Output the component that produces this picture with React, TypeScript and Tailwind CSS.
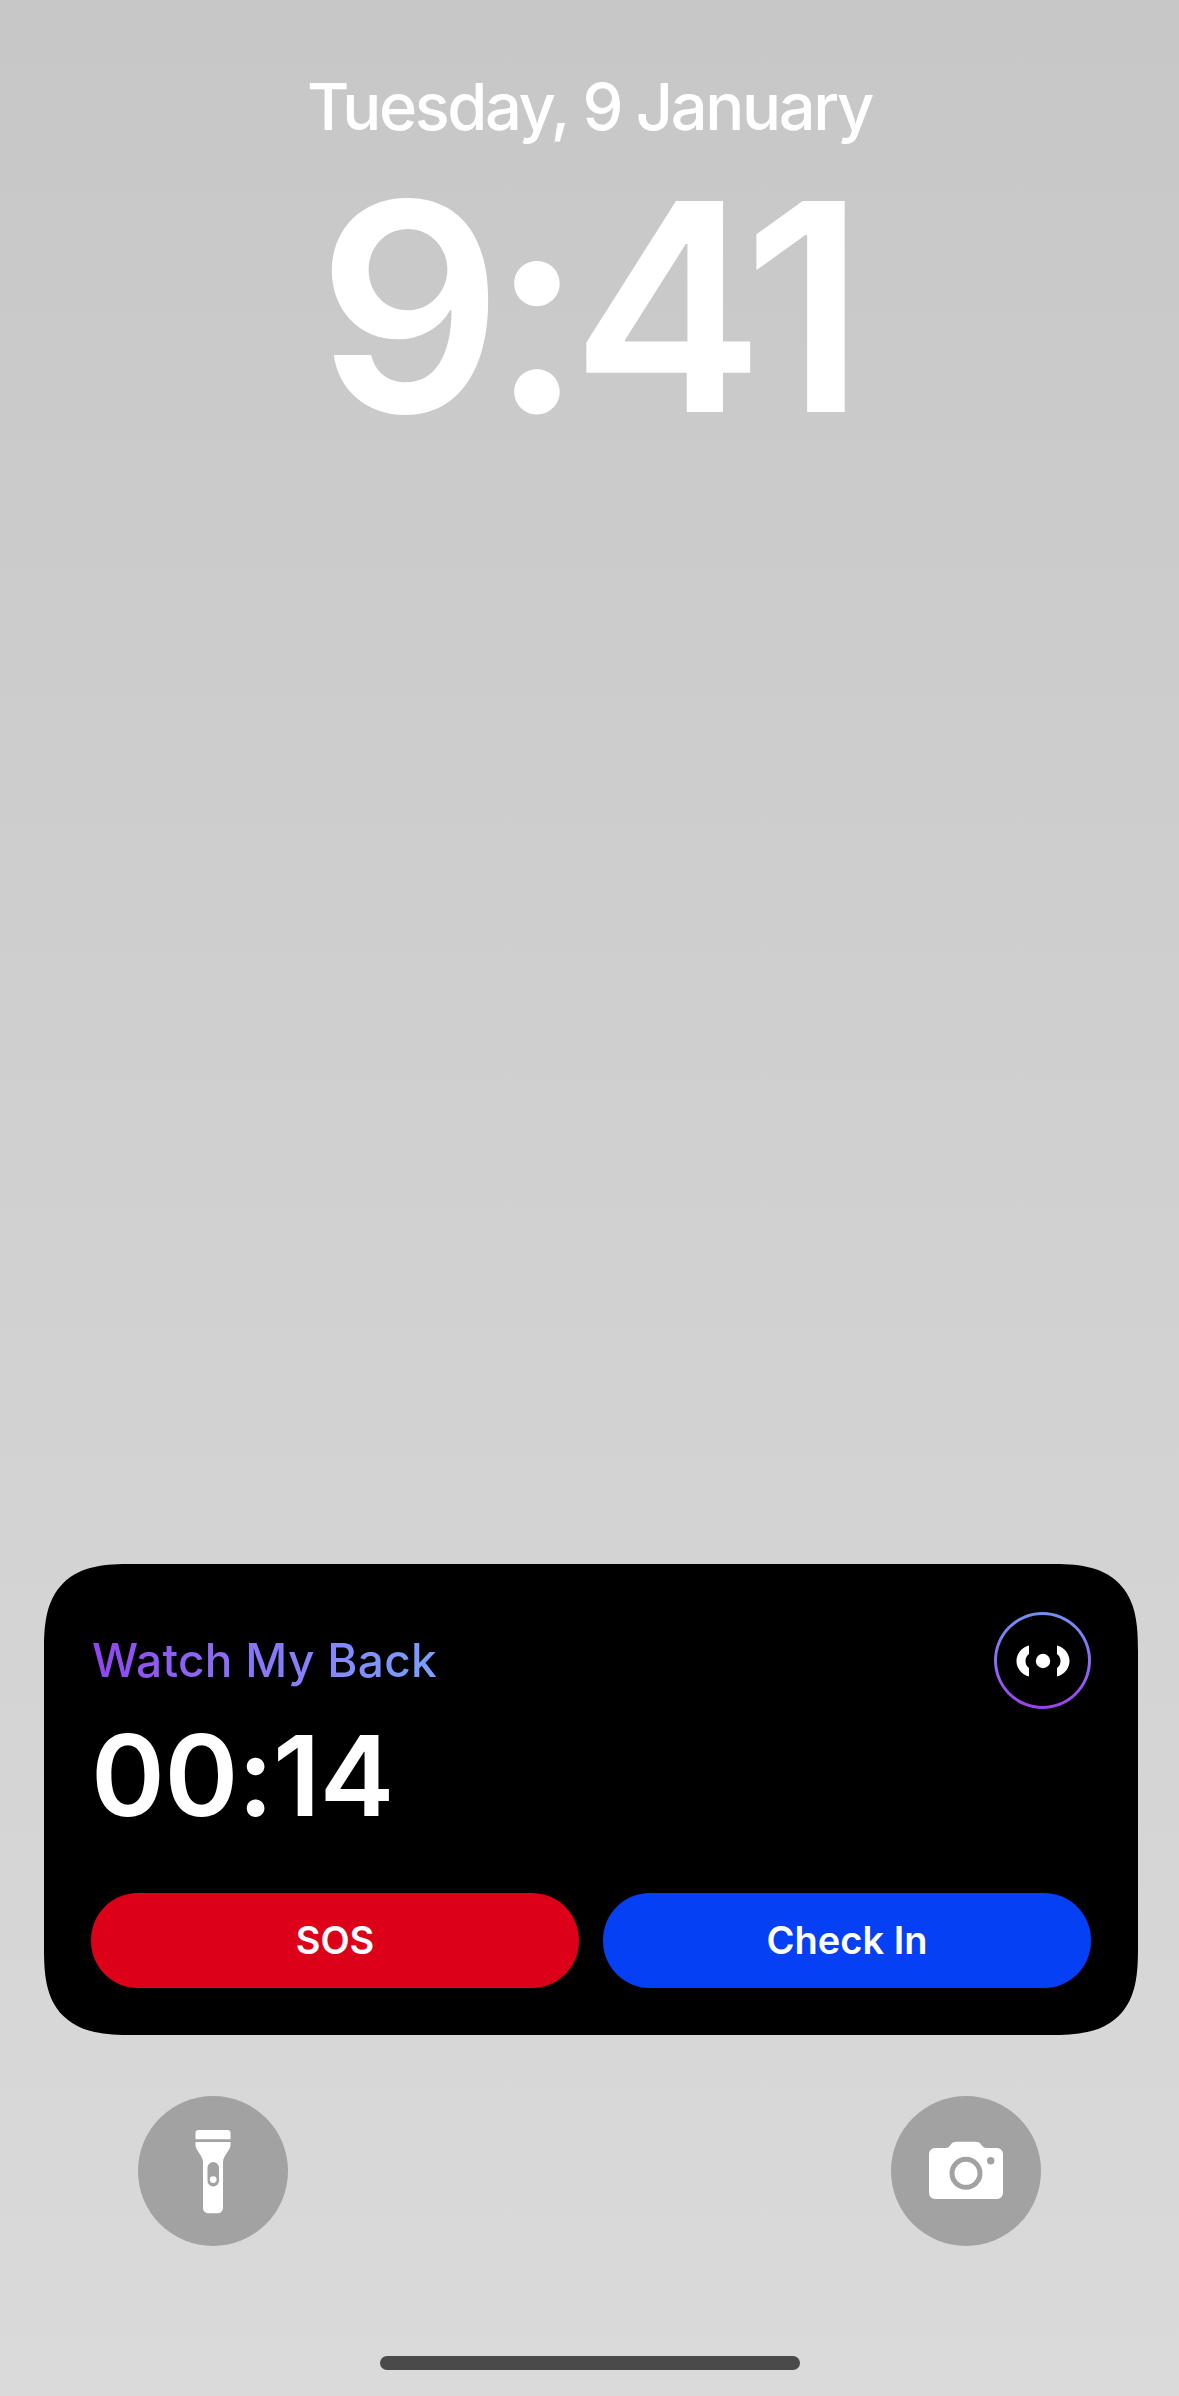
const font = { fontFamily: 'Inter, "Noto Sans", sans-serif' }

function FlashlightIcon() {
  return (
    <svg viewBox="0 0 150 150" className="w-full h-full">
      <path d="M60.500 34h29a3 3 0 0 1 3 3v6.300h-35V37a3 3 0 0 1 3-3z" fill="#fff" />
      <path
        d="M57.500 46h35v3c0 5-7.500 11-7.500 17v46a5.300 5.300 0 0 1-5.300 5.300h-9.400A5.300 5.300 0 0 1 65 112V66c0-6-7.500-12-7.500-17z"
        fill="#fff"
      />
      <rect x="69.500" y="66" width="11.500" height="24.500" rx="5.700" fill="#a2a2a2" />
      <circle cx="75.200" cy="83.600" r="3.400" fill="#fff" />
    </svg>
  )
}

function CameraIcon() {
  return (
    <svg viewBox="0 0 150 150" className="w-full h-full">
      <path
        d="M44 52h10.500c2.500 0 3.500-1 5-3 1.500-2.300 3-3.300 6-3.300h19c3 0 4.500 1 6 3.300 1.500 2 2.500 3 5 3H106a6 6 0 0 1 6 6v39a6 6 0 0 1-6 6H44a6 6 0 0 1-6-6V58a6 6 0 0 1 6-6z"
        fill="#fff"
      />
      <circle cx="75" cy="77.300" r="14" fill="#fff" stroke="#a2a2a2" strokeWidth="5" />
      <circle cx="99.700" cy="64.700" r="3.700" fill="#a2a2a2" />
    </svg>
  )
}

function BroadcastIcon() {
  return (
    <svg viewBox="0 0 90 90" className="w-[90px] h-[90px]">
      <circle cx="45" cy="45" r="7.200" fill="#fff" />
      <path d="M31 29.500C22.500 32 18.500 38.500 18.500 45s4 13 12.500 15.500v-8.500C28.500 50 27.500 48 27.500 45s1-5 3.500-7z" fill="#fff" />
      <path d="M59 29.500C67.500 32 71.500 38.500 71.500 45s-4 13-12.500 15.500v-8.500C61.500 50 62.500 48 62.500 45s-1-5-3.500-7z" fill="#fff" />
    </svg>
  )
}

function LiveActivity() {
  return (
    <div className="w-[1094px] h-[471px] ml-[44px] mt-auto bg-black rounded-[88px] [corner-shape:superellipse(1.5)] px-[47px] pt-[48px]">
      <div className="flex justify-between items-start h-[281px]">
        <div>
          <div className="mt-[20px] ml-[1px] text-[46px] leading-[56px] font-medium tracking-[0.3px] w-fit text-transparent bg-clip-text bg-gradient-to-r from-[#8f45f0] to-[#7aa0ff]">
            Watch My Back
          </div>
          <div className="mt-[19px] text-[112px] leading-[136px] font-semibold text-white tracking-[-0.5px]">
            00:14
          </div>
        </div>
        <div className="w-[97px] h-[97px] rounded-full p-[3px] bg-gradient-to-b from-[#6f90f5] to-[#9a40ee]">
          <div className="w-full h-full rounded-full bg-black flex items-center justify-center">
            <BroadcastIcon />
          </div>
        </div>
      </div>
      <div className="flex gap-[24px]">
        <button className="flex-1 h-[95px] rounded-[47px] bg-[#dc0019] text-white text-[38px] font-semibold">SOS</button>
        <button className="flex-1 h-[95px] rounded-[47px] bg-[#0540f5] text-white text-[38px] font-semibold">Check In</button>
      </div>
    </div>
  )
}

export default function App() {
  return (
    <div
      style={font}
      className="w-[1179px] h-[2396px] overflow-hidden flex flex-col bg-gradient-to-b from-[#c7c7c7] to-[#dadada]"
    >
      <div className="pt-[67px] text-center text-white">
        <div className="text-[65px] leading-[80px] font-medium tracking-[-2.4px]">Tuesday, 9 January</div>
        <div className="mt-[15px] pr-[8px] text-[290px] leading-[290px] font-semibold tracking-[-12px]">9:41</div>
      </div>

      <LiveActivity />

      <div className="flex justify-between px-[138px] mt-[61px]">
        <div className="w-[150px] h-[150px] rounded-full bg-[#a2a2a2]">
          <FlashlightIcon />
        </div>
        <div className="w-[150px] h-[150px] rounded-full bg-[#a2a2a2]">
          <CameraIcon />
        </div>
      </div>

      <div className="w-[420px] h-[14px] mx-auto mt-[110px] mb-[26px] rounded-full bg-[#4a4a4a]" />
    </div>
  )
}
